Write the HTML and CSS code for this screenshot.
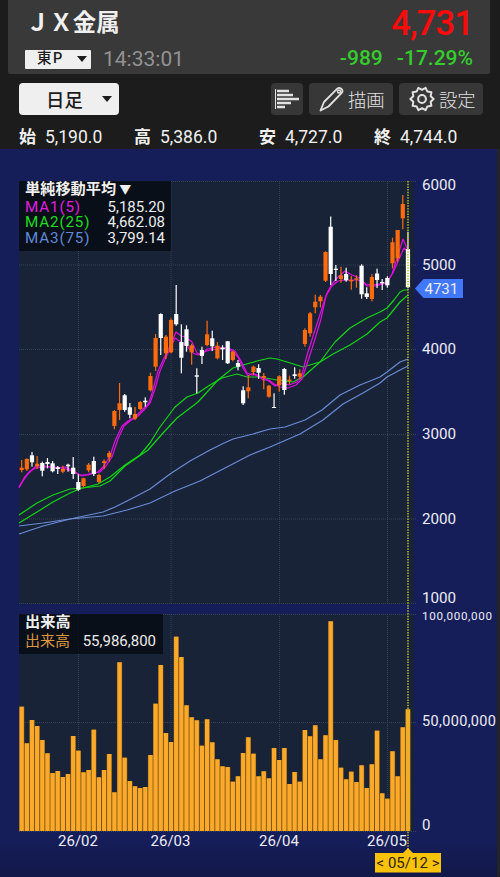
FILE: index.html
```html
<!DOCTYPE html>
<html lang="ja">
<head>
  <meta charset="UTF-8">
  <title>JX金属 チャート</title>
  <meta name="viewport" content="width=device-width, initial-scale=1.0">
  <link rel="stylesheet" href="styles.css">
</head>
<body>

  <header class="quote">
    <div class="quote-left">
      <h1>ＪＸ金属</h1>
      <div class="market">
        <button class="market-select"><span>東P</span><i class="caret"></i></button>
        <span class="time">14:33:01</span>
      </div>
    </div>
    <div class="quote-right">
      <div class="price">4,731</div>
      <div class="change"><span>-989</span><span>-17.29%</span></div>
    </div>
  </header>

  <nav class="toolbar">
    <button class="period"><span>日足</span><i class="caret"></i></button>
    <div class="tools">
      <button class="tool tool-volume">
        <svg width="26" height="24" viewBox="0 0 26 24">
          <path d="M1.500 2v20" stroke="#e2e2e2" stroke-width="1"/>
          <path d="M3 4h12M3 8h16M3 12h22M3 16h14M3 20h8" stroke="#e2e2e2" stroke-width="2.4"/>
        </svg>
      </button>
      <button class="tool tool-draw">
        <svg width="26" height="26" viewBox="0 0 26 26" fill="none" stroke="#e2e2e2" stroke-width="1.8" stroke-linejoin="round">
          <path d="M1.500 24.500l3.500-8.500L18.300 2.700q1.800-1.600 3.900 0 2.300 2 .5 4.200L9.500 20.500z"/>
          <circle cx="20" cy="5.500" r="1.500" stroke-width="1.400"/>
        </svg>
        <span>描画</span>
      </button>
      <button class="tool tool-config">
        <svg width="26" height="26" viewBox="0 0 26 26" fill="none" stroke="#e2e2e2" stroke-width="2" stroke-linejoin="round">
          <path d="M13 3.800L16.600 1.900L18.400 5.600L22.400 6.200L21.700 10.200L24.600 13L21.700 15.800L22.400 19.800L18.400 20.400L16.600 24.100L13 22.200L9.400 24.100L7.600 20.400L3.600 19.800L4.300 15.800L1.400 13L4.300 10.200L3.600 6.200L7.600 5.600L9.400 1.900z"/>
          <circle cx="13" cy="13" r="3.900"/>
        </svg>
        <span>設定</span>
      </button>
    </div>
  </nav>

  <dl class="ohlc">
    <div><dt>始</dt><dd>5,190.0</dd></div>
    <div><dt>高</dt><dd>5,386.0</dd></div>
    <div><dt>安</dt><dd>4,727.0</dd></div>
    <div><dt>終</dt><dd>4,744.0</dd></div>
  </dl>

  <main class="chart">
    <svg id="grafico" width="500" height="728" viewBox="0 149 500 728"></svg>

    <section class="legend legend-ma">
      <h2>単純移動平均<small>▼</small></h2>
      <p class="ma1"><span>MA1(5)</span><b>5,185.20</b></p>
      <p class="ma2"><span>MA2(25)</span><b>4,662.08</b></p>
      <p class="ma3"><span>MA3(75)</span><b>3,799.14</b></p>
    </section>

    <section class="legend legend-vol">
      <h2>出来高</h2>
      <p><span>出来高</span><b>55,986,800</b></p>
    </section>
  </main>

  <script src="chart.js"></script>
</body>
</html>
```
FILE: styles.css
```css
* { margin: 0; padding: 0; box-sizing: border-box; }
body { width: 500px; height: 877px; overflow: hidden; background: #1c1c1c; color: #f0f0f0; font-family: Roboto, "Noto Sans CJK JP", sans-serif; }
button { border: none; font-family: inherit; display: flex; align-items: center; }
.caret { border: 5px solid transparent; border-top: 6px solid #1c1c1c; border-bottom: 0; }

.quote { display: flex; justify-content: space-between; height: 74px; margin: 0 10px 0 8px; background: #393939; border-radius: 0 0 2px 2px; }
.quote-left { padding: 6px 0 0 18px; }
.quote h1 { font-family: "Noto Sans CJK JP", sans-serif; font-size: 23.4px; line-height: 30px; font-weight: 700; }
.market { display: flex; align-items: center; gap: 12px; margin: 13px 0 0 -1px; height: 20px; }
.market-select { width: 66px; height: 19px; padding: 0 4px 2px 12px; justify-content: space-between; background: #efefef; color: #1c1c1c; font-size: 14.5px; line-height: 17px; font-weight: 500; letter-spacing: 1.5px; border-radius: 1px; }
.market-select .caret { margin-top: 2px; }
.time { color: #929292; font-size: 21px; }
.quote-right { padding: 4px 17px 0 0; text-align: right; }
.price { color: #ff0a0a; font-family: Roboto, sans-serif; font-size: 34.5px; line-height: 38px; font-weight: 500; letter-spacing: -0.9px; }
.change { display: flex; gap: 14px; color: #35cc2c; font-size: 21px; line-height: 32px; font-weight: 500; }

.toolbar { display: flex; justify-content: space-between; height: 50px; padding: 9px 17px 0 19px; }
.period { width: 100px; height: 32px; padding: 0 7px 0 27px; justify-content: space-between; border-radius: 4px; background: #efefef; color: #1c1c1c; font-size: 18.4px; font-weight: 500; }
.tools { display: flex; gap: 6px; }
.tool { height: 32px; border-radius: 4px; background: #373737; color: #e2e2e2; font-size: 18.3px; }
.tool span { font-weight: 300; }
.tool-volume { width: 32px; padding-left: 3px; }
.tool-draw { width: 84px; padding-left: 10px; gap: 3px; }
.tool-config { width: 84px; padding-left: 10px; gap: 4px; }

.ohlc { display: grid; grid-template-columns: 115px 125px 115px auto; height: 25px; padding-left: 19px; line-height: 27px; }
.ohlc div { display: flex; gap: 9px; }
.ohlc dt { font-size: 17px; font-weight: 700; }
.ohlc dd { font-size: 17.5px; }

.chart { position: relative; height: 728px; background: linear-gradient(#161e5a 0, #161e5a 690px, #121848 728px); border-right: 3px solid #242424; }
.chart > svg { display: block; }
.chart text { font-family: Roboto, sans-serif; fill: #ececf4; }

.legend { position: absolute; left: 19px; padding-left: 6px; background: rgba(5, 10, 18, 0.8); }
.legend h2 { font-size: 15.2px; font-weight: 700; line-height: 16px; }
.legend h2 small { font-size: 12px; margin-left: 3px; }
.legend p { display: flex; justify-content: space-between; }
.legend b { font-weight: 400; color: #ececec; font-size: 15px; letter-spacing: 0; }
.legend-ma { top: 32px; width: 152px; height: 70px; padding-right: 6px; }
.legend-ma h2 { margin-bottom: 2px; }
.legend-ma p { height: 15.4px; line-height: 15.4px; font-size: 15.2px; letter-spacing: 0.85px; font-family: Roboto, sans-serif; }
.legend-ma b { font-size: 15px; }
.ma1 { color: #e01ce0; }
.ma2 { color: #1edc1e; }
.ma3 { color: #6088d8; }
.legend-vol { top: 465px; width: 144px; height: 40px; padding-right: 7px; }
.legend-vol p { color: #dc9640; font-size: 15px; line-height: 22px; }

.grid { stroke: #344558; stroke-width: 1; stroke-dasharray: 1 1; }
.line { fill: none; stroke-width: 1.2; stroke-linejoin: round; }
.cursor { stroke: #b8c422; stroke-width: 1.4; stroke-dasharray: 1.5 1.2; }
```
FILE: chart.js
```js
const svg = document.getElementById('grafico');
const inicioX = 21.7;
const passo = 5.15;

// type, high, body top, body bottom, low
const velas = [
  ['o',460,467.7,470,472.3], ['o',458.3,459,469.3,471], ['w',452,455.3,462.3,466.7], ['o',456,463.7,466.3,469],
  ['w',461.7,463,470.7,476.3], ['w',458,462,464,468.3], ['w',461,463.3,471.3,472.3], ['w',466,467.3,469,474],
  ['o',465.7,469,471.7,473.3], ['w',463.7,464.7,466.3,471.7], ['w',457,467.7,474,479], ['w',474.3,482,489.7,490.7],
  ['o',477.7,478.3,486,487.3], ['o',463,464.7,470.3,472.3], ['w',456.7,461,474,476], ['o',473.7,475,482,483.3],
  ['o',459.3,461.3,463,469], ['o',451,453,457.3,461.7], ['o',410,411,426,429.3], ['o',383,403.3,410,420],
  ['w',394,395.3,410,411.7], ['w',403,407.3,414.7,418.3], ['o',407,414,418.7,420], ['o',401,402,409,410],
  ['w',397.3,400.7,402.3,406.7], ['o',372.7,376,390.3,391.3], ['o',334,338,366.7,371], ['w',313.3,314,338,355],
  ['o',335,336.7,353.3,359], ['o',318.3,320,352.3,353.3], ['w',285,314,324.3,325.7], ['w',324.3,342,357.7,373.3],
  ['w',325.3,329.3,346,351.7], ['o',343.7,345.3,352.3,364.7], ['w',368.3,375.3,376.7,393.3], ['w',346.7,350,356,364],
  ['o',320.7,334.3,345,346.3], ['w',330.7,338.3,346.3,351], ['o',342,345.7,358.3,359.3], ['w',345.3,347.7,349.3,360],
  ['w',341,341.3,363.3,364], ['o',350.7,351.7,360,361.3], ['w',360,363,366.7,370.3], ['w',386.3,390.3,403.3,405],
  ['o',375,387.3,391.3,398.3], ['o',365.7,366.7,372,375], ['w',364.3,368,372.7,379], ['o',373,376,377.7,389.3],
  ['o',385,385.7,396.7,397.7], ['w',393.3,407,408,408], ['o',375.3,376.3,385.3,391.7], ['w',368,369,390,394.7],
  ['o',375.7,379.7,381,384.3], ['w',367.3,374.3,376,378.7], ['o',369.3,373.3,376.7,379.3], ['o',328.3,330,344,346.7],
  ['o',312,313.3,333.3,336.7], ['o',294.7,301.7,307.3,313.3], ['o',295,296.7,301.3,307.3], ['o',251.3,252,280.7,282],
  ['w',216.5,226.7,274,285], ['w',265,268.7,270,281], ['o',266.7,275.3,279,282.7], ['w',267.7,274,280.3,281.7],
  ['o',276,280,281.3,289.7], ['o',275.3,278.3,279.7,287.7], ['w',264.3,265.7,294.3,298.7], ['w',287.3,293.3,297,299],
  ['o',274,277,299,301.3], ['w',268.7,273.5,280,288], ['w',279,282,283.3,290], ['w',276.3,278,285.3,287.7],
  ['o',237.7,242.3,263.3,268.3], ['o',230,230,258.3,261.7], ['o',195,204,218.3,229.3], ['w',231.7,249,287.3,288.3]
];

const volume = [
  706.7, 743.3, 720, 726, 740, 753.3, 773, 771, 777, 774, 736, 750.7, 772.3, 770, 729.7, 777.3, 770, 754, 792.3,
  662.3, 757.7, 781, 786.3, 788, 787, 755, 703.7, 665, 733, 742, 636.7, 657, 705.3, 717.3, 720.3, 745.7, 719.3,
  742.3, 759.3, 766.3, 767, 781.7, 776.3, 753, 737.3, 753.7, 776.3, 771.3, 778.3, 748, 760, 748, 784, 772, 781.7,
  730, 736.3, 725.3, 759.3, 735.3, 621.3, 740, 767.7, 779.3, 771.7, 782, 765.3, 788, 764.3, 730.7, 793.3, 798.7,
  751.3, 776.3, 727.3, 709.3
];

const medias = [
  ['#6a8bd6', '19,526 43,523 70,519 103,512 115,507 127,501 150,489 170,474 190,461 210,450 222,444 233,439 253,434 270,429 285,427 305,420 322,410 340,395 360,385 380,377 387,372 400,362 408,359'],
  ['#6a8bd6', '19,534 43,526 70,519 103,516 127,510 150,503 175,491 200,481 225,468 250,455 270,447 300,434 323,420 343,404 363,393 380,383 387,377 400,370 408,366'],
  ['#14d514', '19,515 37,503 53,495 70,489 83,488 98,484 110,477 125,465 140,455 150,443 160,427 175,407 187,397 198,393 210,385 222,378 237,374 247,377 260,377 277,380 293,382 303,377 320,362 335,342 350,328 367,318 380,312 387,308 394,300 400,292 404,290 408,290'],
  ['#14d514', '19,523 37,512 53,502 70,493 82,488 100,486 110,481 125,466 148,450 163,433 177,418 198,402 218,380 233,368 243,365 257,361 270,358 277,359 287,362 303,367 320,362 333,354 350,345 367,334 380,322 387,318 400,302 408,295'],
  ['#dd10dd', '19,488 23,481 28,474 36,466 45,466 55,468 65,467 72,470 80,475 88,475 98,472 104,466 110,456 115,441 122,426 128,421 135,417 142,410 149,403 152,393 158,371 165,356 171,344 176,332 181,336 186,337 192,342 197,353 202,355 207,349 217,347 227,348 233,352 238,357 243,368 248,376 253,373 259,377 264,378 270,382 275,386 280,383 289,385 297,382 302,374 307,355 315,330 323,305 327,293 332,284 337,278 345,271 352,275 360,278 367,286 375,286 387,283 392,274 398,255 403,239 408,251'],
  ['#dd10dd', '19,487 24,478 30,471 36,468 45,467 56,467 66,469 74,472 82,476 92,473 100,472 106,466 112,457 118,439 124,426 130,421 138,416 144,410 150,403 155,389 160,371 166,357 171,347 175,338 181,342 187,346 193,353 198,355 204,352 210,350 218,349 228,348 235,351 241,361 247,373 252,375 258,375 263,380 269,380 274,384 280,387 288,388 296,385 302,379 309,358 316,336 321,319 326,296 332,286 338,281 344,280 350,280 358,280 366,284 373,285 386,283 393,273 399,259 404,248 408,252']
];

let saida = '';

// plot areas
saida += '<rect x="19" y="181" width="395" height="423" fill="#192337"/>';
saida += '<rect x="19" y="614" width="395" height="217" fill="#192337"/>';

[181.5, 265, 349.5, 434.5, 519, 603.5, 614.5, 722.5, 831.5].forEach(y => {
  saida += `<path class="grid" d="M19 ${y}H416"/>`;
});
[78.5, 171, 279.5, 387.5].forEach(x => {
  saida += `<path class="grid" d="M${x} 181V604M${x} 614V831"/>`;
});

volume.forEach((y, i) => {
  const x = inicioX + i * passo;
  saida += `<rect x="${x - 2.6}" y="${y}" width="5.2" height="${831 - y}" fill="#916014"/>`;
  saida += `<rect x="${x - 2.1}" y="${y}" width="4.2" height="${831 - y}" fill="#faa92a"/>`;
});

medias.forEach(m => {
  saida += `<polyline class="line" stroke="${m[0]}" points="${m[1]}"/>`;
});

velas.forEach((v, i) => {
  const x = inicioX + i * passo;
  const cor = v[0] === 'o' ? '#ff6a0a' : '#ffffff';
  saida += `<rect x="${x - 0.6}" y="${v[1]}" width="1.2" height="${v[4] - v[1]}" fill="${cor}"/>`;
  saida += `<rect x="${x - 2.1}" y="${v[2]}" width="4.2" height="${v[3] - v[2]}" fill="${cor}"/>`;
});

saida += '<path class="cursor" d="M408 181V850"/>';

// axis labels
[['6000',190], ['5000',269.5], ['4000',354], ['3000',438.5], ['2000',523.5], ['1000',603]].forEach(t => {
  saida += `<text x="422" y="${t[1]}" font-size="15.2">${t[0]}</text>`;
});
saida += '<text x="422" y="620" font-size="11.6" textLength="70">100,000,000</text>';
saida += '<text x="422" y="726" font-size="14.5" textLength="74">50,000,000</text>';
saida += '<text x="422" y="829.5" font-size="15">0</text>';
[['26/02',78], ['26/03',170.5], ['26/04',279], ['26/05',387]].forEach(t => {
  saida += `<text x="${t[1]}" y="845.5" font-size="15" textLength="40" text-anchor="middle">${t[0]}</text>`;
});

saida += '<path d="M415 288.5L423.5 279H463V298H423.5z" fill="#4178fa"/>';
saida += '<text x="424.5" y="294" font-size="15">4731</text>';
saida += '<path d="M375 853H403L408 848L413 853H441V872.5H375z" fill="#fac30a"/>';
saida += '<text x="408" y="868" font-size="15" textLength="63" text-anchor="middle" style="fill:#30240a">&lt; 05/12 &gt;</text>';

svg.innerHTML = saida;
```
